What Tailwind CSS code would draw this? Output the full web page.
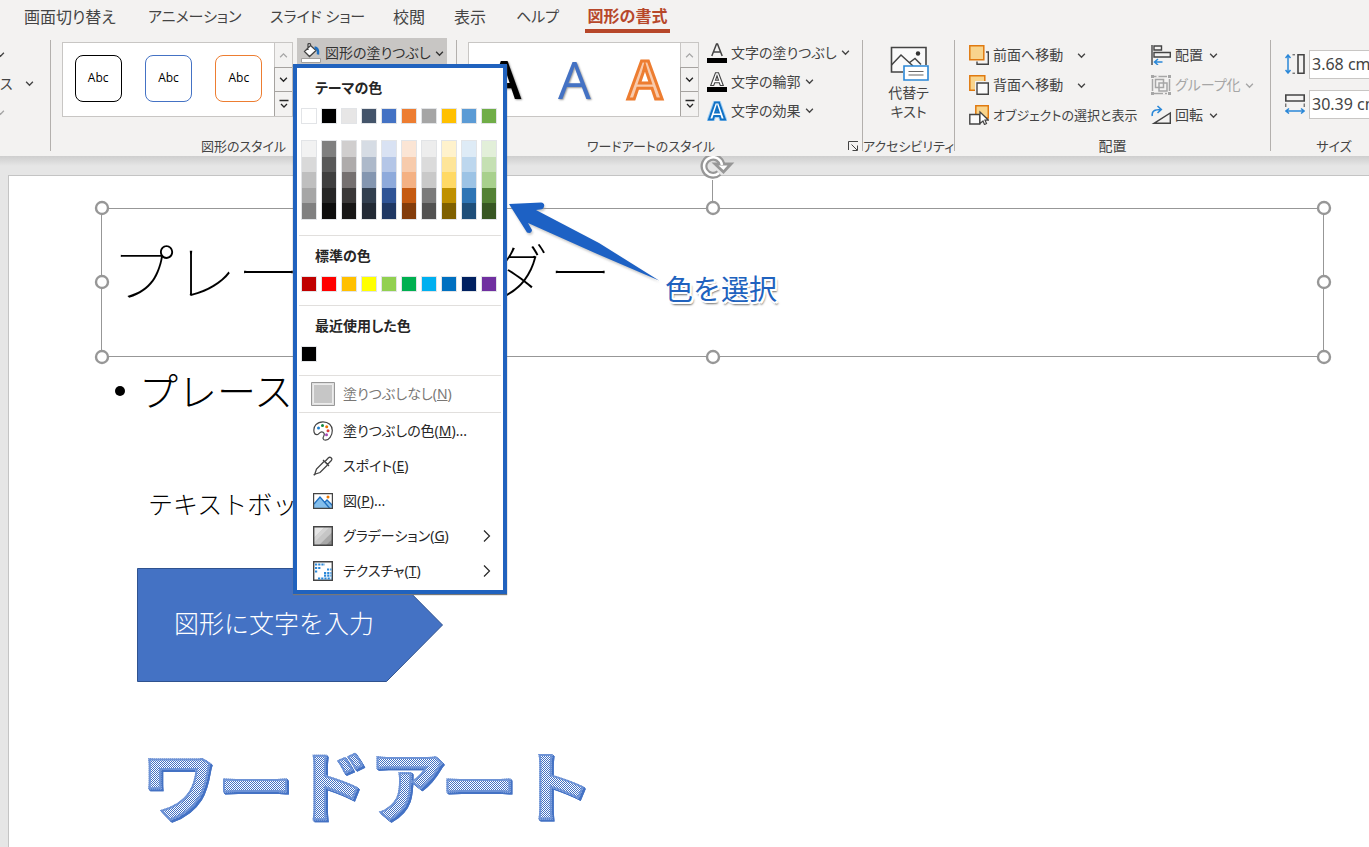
<!DOCTYPE html>
<html lang="ja">
<head>
<meta charset="utf-8">
<title>図形の書式</title>
<script src="https://cdn.jsdelivr.net/npm/@tailwindcss/browser@4"></script>
</head>
<body class="flex h-screen flex-col overflow-hidden bg-[#e6e6e6] font-['Noto_Sans','Noto_Sans_CJK_JP',sans-serif] text-sm text-[#444444]">

<svg class="hidden" aria-hidden="true">
  <symbol id="chev" viewBox="0 0 8 8"><path d="M1 2.500 4 5.500 7 2.500" fill="none" stroke="currentColor" stroke-width="1.200"/></symbol>
  <symbol id="up" viewBox="0 0 8 8"><path d="M1 5.500 4 2.500 7 5.500" fill="none" stroke="currentColor" stroke-width="1.100"/></symbol>
  <symbol id="more" viewBox="0 0 10 10"><path d="M0.500 1.500h9M2 5l3 3 3-3" fill="none" stroke="currentColor" stroke-width="1.300"/></symbol>
  <symbol id="right" viewBox="0 0 8 14"><path d="M1 1.500 6.500 7 1 12.500" fill="none" stroke="currentColor" stroke-width="1.200"/></symbol>
</svg>

<header class="relative z-10 shrink-0 bg-[#f3f2f1]">
  <nav class="flex h-[38px] pl-6 text-base whitespace-nowrap [font-feature-settings:'palt']">
    <button class="flex h-[33px] w-[124px] items-center">画面切り替え</button>
    <button class="flex h-[33px] w-[122px] items-center text-[15px]">アニメーション</button>
    <button class="flex h-[33px] w-[123px] items-center text-[15px]">スライド ショー</button>
    <button class="flex h-[33px] w-[61px] items-center">校閲</button>
    <button class="flex h-[33px] w-[62px] items-center">表示</button>
    <button class="flex h-[33px] w-[69px] items-center text-[15px]">ヘルプ</button>
    <button class="flex h-[33px] w-[85px] items-center justify-center border-b-4 border-[#b7472a] pt-[3px] font-bold text-[#b7472a]">図形の書式</button>
  </nav>

  <div class="flex h-[118px] whitespace-nowrap [font-feature-settings:'palt']">
    <section class="flex w-[50px] shrink-0 flex-col pt-[2px]">
      <button class="flex h-[29px] items-center" aria-label="図形の挿入"><svg class="-ml-1 size-[9px]"><use href="#chev"/></svg></button>
      <button class="flex h-[29px] items-center gap-3">ス<svg class="size-[9px]"><use href="#chev"/></svg></button>
      <button class="flex h-[29px] items-center text-[#a6a6a6]" aria-label="図形の結合"><svg class="-ml-1 size-[9px]"><use href="#chev"/></svg></button>
    </section>
    <div class="mt-[2px] mb-[5px] w-px shrink-0 bg-[#b3b0ad]"></div>

    <section class="flex w-[405px] shrink-0 flex-col">
      <div class="flex flex-1 items-start gap-1 pl-[11px]">
        <div class="mt-1 flex h-[75px] w-[231px] border border-[#c8c6c4] bg-white font-['Open_Sans','Noto_Sans',sans-serif] text-xs text-black">
          <div class="grid flex-1 grid-cols-3 place-items-center pb-0.5">
            <button class="size-[47px] rounded-lg border border-black pb-0.5">Abc</button>
            <button class="size-[47px] rounded-lg border border-[#4472c4] pb-0.5">Abc</button>
            <button class="size-[47px] rounded-lg border border-[#ed7d31] pb-0.5">Abc</button>
          </div>
          <div class="grid w-[18px] grid-rows-3 text-[#262626]">
            <button class="grid place-items-center border-l border-[#c8c6c4] bg-[#f3f2f1] text-[#a6a6a6]" aria-label="上へ"><svg class="size-[9px]"><use href="#up"/></svg></button>
            <button class="grid place-items-center border-y border-l border-[#a6a3a0] bg-[#f3f2f1]" aria-label="下へ"><svg class="size-[9px]"><use href="#chev"/></svg></button>
            <button class="grid place-items-center border-l border-[#a6a3a0] bg-[#f3f2f1]" aria-label="その他"><svg class="size-2.5"><use href="#more"/></svg></button>
          </div>
        </div>

        <div class="relative">
          <button class="flex h-[30px] w-[150px] items-center gap-1 bg-[#c8c6c4] pl-1 text-[#333333]">
            <svg class="h-5 w-5" viewBox="0 0 20 20" fill="none"><path d="M9.500 2.500 3.500 8.500 8.500 13.500 15 7.500 9.500 2.500V1.500C9.500.2 7 .2 7 1.500V7" fill="#fff" stroke="#444" stroke-width="1.300"/><path d="M13.500 4.500c3 .5 4 3 3.500 7" stroke="#1e6fc0" stroke-width="2.500"/><path d="M.5 15.500h19v4H.5z" fill="#fff" stroke="#a19f9d"/></svg>
            図形の塗りつぶし
            <svg class="size-[9px]"><use href="#chev"/></svg>
          </button>

          <div class="absolute top-[26px] -left-1 z-20 w-[214px] border-4 border-[#2062be] bg-white pb-[2px] text-[#262626] shadow-[0_1px_1px_#777777]">
            <h3 class="flex h-10 items-center pl-[18px] font-bold">テーマの色</h3>
            <div id="theme" class="flex gap-1 pl-1"></div>
            <div id="tints" class="mt-4 flex gap-1 pl-1"></div>
            <hr class="mx-0.5 mt-[15px] border-[#e1dfdd]">
            <h3 class="flex h-10 items-center pl-[18px] font-bold">標準の色</h3>
            <div id="standard" class="flex gap-1 pl-1"></div>
            <hr class="mx-0.5 mt-[13px] border-[#e1dfdd]">
            <h3 class="flex h-10 items-center pl-[18px] font-bold">最近使用した色</h3>
            <div id="recent" class="flex gap-1 pl-1"></div>
            <hr class="mx-0.5 mt-[13px] border-[#e1dfdd]">
            <button class="flex h-9 w-full items-center gap-2 pl-3.5 text-[#797775]">
              <svg class="size-6" viewBox="0 0 24 24"><path d="M.5.5h23v23H.5z" fill="#e0e0e0" stroke="#979797"/><path d="M2.500 2.500h19v19h-19z" fill="#c6c6c6" stroke="#ececec"/></svg>
              <span>塗りつぶしなし(<u>N</u>)</span>
            </button>
            <hr class="mx-0.5 border-[#e1dfdd]">
            <button class="flex h-[35px] w-full items-center gap-2.5 pl-4">
              <svg class="size-5" viewBox="0 0 20 20" fill="none"><path d="M1.200 11.500C-.5 5 4.500.8 10 .8c5.500 0 9.300 3.700 9.300 8.700 0 5.500-3.500 9.700-6.800 9.700-2.600 0-2.900-2.200-1.800-4 1.300-2.300.2-4.300-2-4.300-2.200 0-2.900 2.800-4.900 2.800-1.200 0-2.200-.7-2.600-2.200Z" stroke="#444" stroke-width="1.200"/><circle cx="5.500" cy="7" r="1.500" fill="#1e7fd0"/><circle cx="9.500" cy="4.600" r="1.500" fill="#10893e"/><circle cx="13.700" cy="5.700" r="1.500" fill="#ea7600"/><circle cx="15" cy="9.700" r="1.500" fill="#d83b3b"/><circle cx="13.500" cy="13.700" r="1.500" fill="#a44cb8"/></svg>
              <span>塗りつぶしの色(<u>M</u>)...</span>
            </button>
            <button class="flex h-[35px] w-full items-center gap-2.5 pl-4">
              <svg class="size-5" viewBox="0 0 20 20" fill="none" stroke="#444" stroke-width="1.300"><path d="M11 5.500 3.500 13 2 17.500.8 19.200 2.500 18 7 16.500 14.500 9"/><path d="m10 4 6 6M12 5.500l3.500-3.700c1.500-1.500 4.500.5 2.800 2.700L14.500 8.500z"/></svg>
              <span>スポイト(<u>E</u>)</span>
            </button>
            <button class="flex h-[35px] w-full items-center gap-2.5 pl-4">
              <svg class="size-5" viewBox="0 0 20 20"><path d="M.5 2.500h19v15H.5z" fill="#fff"/><path d="M1 13 7 6l5 5 2-2 5.500 5v3H1z" fill="#83beec"/><path d="m1 13 6-7 9.500 11M11.500 11.500 14 9l5.500 5.500" fill="none" stroke="#1e6fc0" stroke-width="1.300"/><circle cx="15" cy="6" r="1.500" fill="#ea7600"/><path d="M.6 2.600h18.800v14.800H.6z" fill="none" stroke="#444" stroke-width="1.200"/></svg>
              <span>図(<u>P</u>)...</span>
            </button>
            <button class="flex h-[35px] w-full items-center gap-2.5 pr-3 pl-4">
              <svg class="size-5" viewBox="0 0 20 20"><path d="M.7.7h18.600v18.600H.7z" fill="#c6c6c6"/><path d="M.7.7H12L.7 12z" fill="#e6e6e6"/><path d="M12 .7h5L.7 17v-5z" fill="#d4d4d4"/><path d="M19.300 6v13.300H6z" fill="#a8a8a8"/><path d="M19.300 13v6.300H13z" fill="#8a8a8a"/><path d="M.7.7h18.600v18.600H.7z" fill="none" stroke="#444" stroke-width="1.400"/></svg>
              <span class="flex-1 text-left">グラデーション(<u>G</u>)</span><svg class="h-3.5 w-2"><use href="#right"/></svg>
            </button>
            <button class="flex h-[35px] w-full items-center gap-2.5 pr-3 pl-4">
              <svg class="size-5" viewBox="0 0 20 20"><path d="M.7.7h18.600v18.600H.7z" fill="#fff" stroke="#444" stroke-width="1.400"/><path d="M2 3.500h10M2 7h6M2 10.500h3M14 8.500h4.500M11 12h7.500M11 14.700h7.500M5 17.500h13.500" stroke="#2b88d8" stroke-width="2.200" stroke-dasharray="2.200 1"/></svg>
              <span class="flex-1 text-left">テクスチャ(<u>T</u>)</span><svg class="h-3.5 w-2"><use href="#right"/></svg>
            </button>
          </div>
        </div>
      </div>
      <div class="flex h-5 items-center pr-5 text-[13px]"><span class="flex-1 text-center">図形のスタイル</span></div>
    </section>
    <div class="mt-[2px] mb-[5px] w-px shrink-0 bg-[#b3b0ad]"></div>

    <section class="flex w-[405px] shrink-0 flex-col">
      <div class="flex flex-1 items-start pl-[11px]">
        <div class="mt-1 flex h-[75px] w-[231px] border border-[#c8c6c4] bg-white font-['Open_Sans','Noto_Sans',sans-serif] text-[52px] leading-none">
          <div class="grid flex-1 grid-cols-3 place-items-center pb-0.5">
            <button class="font-semibold text-black [text-shadow:1px_1px_2px_#999999]">A</button>
            <button class="font-medium text-[#4472c4] [text-shadow:1px_1px_2px_#999999]">A</button>
            <button class="font-semibold text-[#f8cbad] [-webkit-text-stroke:3px_#ed7d31]">A</button>
          </div>
          <div class="grid w-[18px] grid-rows-3 text-[#262626]">
            <button class="grid place-items-center border-l border-[#c8c6c4] bg-[#f3f2f1] text-[#a6a6a6]" aria-label="上へ"><svg class="size-[9px]"><use href="#up"/></svg></button>
            <button class="grid place-items-center border-y border-l border-[#a6a3a0] bg-[#f3f2f1]" aria-label="下へ"><svg class="size-[9px]"><use href="#chev"/></svg></button>
            <button class="grid place-items-center border-l border-[#a6a3a0] bg-[#f3f2f1]" aria-label="その他"><svg class="size-2.5"><use href="#more"/></svg></button>
          </div>
        </div>
        <div class="flex flex-col pl-2">
          <button class="flex h-[29px] items-center gap-1"><svg class="size-5" viewBox="0 0 20 20"><path d="M4.800 13 9.500 1h1l4.700 12M6.500 9h7" fill="none" stroke="#444" stroke-width="1.500"/><path d="M0 15h20v5H0z"/></svg>文字の塗りつぶし<svg class="size-[9px]"><use href="#chev"/></svg></button>
          <button class="flex h-[29px] items-center gap-1"><svg class="size-5" viewBox="0 0 20 20"><path d="M3.700 13.500 8.500.8h3l4.800 12.700h-3l-1-2.700H7.700l-1 2.700zM8.500 8.200h3L10 3.800z" fill="#fff" stroke="#444" stroke-width="1.100"/><path d="M0 15h20v5H0z"/></svg>文字の輪郭<svg class="size-[9px]"><use href="#chev"/></svg></button>
          <button class="flex h-[29px] items-center gap-1"><svg class="size-5" viewBox="0 0 20 20"><path d="M2 18.500 8 1.500h4l6 17h-4l-1.200-3.500H7.200L6 18.500zM8.200 11.500h3.600L10 6z" fill="#fff" stroke="#9fcff5" stroke-width="4"/><path d="M2 18.500 8 1.500h4l6 17h-4l-1.200-3.500H7.200L6 18.500zM8.200 11.500h3.600L10 6z" fill="#fff" stroke="#1171c4" stroke-width="2"/></svg>文字の効果<svg class="size-[9px]"><use href="#chev"/></svg></button>
        </div>
      </div>
      <div class="flex h-5 items-center pr-px text-[13px]"><span class="flex-1 text-center">ワードアートのスタイル</span>
        <button class="grid w-4 place-items-center" aria-label="図形の書式設定"><svg class="size-3" viewBox="0 0 12 12" fill="none" stroke="#444"><path d="M1.500 10V1.500H11M4.500 4.500l5.500 5.500M10.500 5.500v5h-5"/></svg></button></div>
    </section>
    <div class="mt-[2px] mb-[5px] w-px shrink-0 bg-[#b3b0ad]"></div>

    <section class="flex w-[91px] shrink-0 flex-col items-center">
      <button class="flex flex-1 flex-col items-center pt-2 leading-[19px]">
        <svg class="mb-0.5 ml-0.5 h-[35px] w-[39px]" viewBox="0 0 39 35" fill="none"><path d="M13 26H1.500V1.500H36V19" fill="#fafafa" stroke="#444" stroke-width="1.600"/><path d="m1.500 19 9.500-10 12 11M19 17l6-4.500 6 6" stroke="#444" stroke-width="1.500"/><circle cx="28" cy="7.500" r="2.200" fill="#333"/><path d="M14 20h24v14H14z" fill="#fff" stroke="#2b88d8" stroke-width="1.600"/><path d="M18.500 25.500h15M18.500 29h15" stroke="#666" stroke-width="1.200"/></svg>
        <span>代替テ<br>キスト</span>
      </button>
      <div class="flex h-5 items-center text-[13px]">アクセシビリティ</div>
    </section>
    <div class="mt-[2px] mb-[5px] w-px shrink-0 bg-[#b3b0ad]"></div>

    <section class="flex w-[315px] shrink-0 flex-col">
      <div class="flex flex-1 pt-[2px] pl-3.5">
        <div class="flex w-[182px] flex-col">
          <button class="flex h-[30px] items-center gap-1"><svg class="size-5" viewBox="0 0 20 20" fill="none"><path d="M17 7h2.300v12.300H8V16.500" stroke="#444" stroke-width="1.400"/><path d="M.8.8h14v14H.8z" fill="#f8d48c" stroke="#e07a10" stroke-width="1.500"/></svg><span class="w-20 text-left">前面へ移動</span><svg class="size-[9px]"><use href="#chev"/></svg></button>
          <button class="flex h-[30px] items-center gap-1"><svg class="size-5" viewBox="0 0 20 20" fill="none"><path d="M.8.8h15v14.500H.8z" fill="#f8d48c" stroke="#e07a10" stroke-width="1.500"/><path d="M6 6h14v14H6z" fill="#f3f2f1"/><path d="M8 8h11.300v11.300H8z" fill="#fafafa" stroke="#444" stroke-width="1.400"/></svg><span class="w-20 text-left">背面へ移動</span><svg class="size-[9px]"><use href="#chev"/></svg></button>
          <button class="flex h-[30px] items-center gap-1 text-[13px]"><svg class="size-5" viewBox="0 0 20 20" fill="none"><path d="M6.800.8h12.500V13H6.800z" fill="#f8d48c" stroke="#e07a10" stroke-width="1.500"/><path d="M.8 9.500h10v9.500H.8z" fill="#fafafa" stroke="#444" stroke-width="1.400"/><path d="M11 7v11.500l3-2.500 1.500 3.500 2-1-1.500-3.300h3.500z" fill="#fff" stroke="#444" stroke-width="1.200"/></svg>オブジェクトの選択と表示</button>
        </div>
        <div class="flex flex-col">
          <button class="flex h-[30px] items-center gap-1"><svg class="size-5" viewBox="0 0 20 20" fill="none"><path d="M1 0v20M3 1h7.500v4H3zM3 7.500h16.300v4.500H3z" stroke="#444" stroke-width="1.400"/><path d="M11.500 17H3.500m3.500-3-3.500 3L7 20" stroke="#2b88d8" stroke-width="1.500"/></svg>配置<svg class="ml-0.5 size-[9px]"><use href="#chev"/></svg></button>
          <button class="flex h-[30px] items-center gap-1 text-[#a6a6a6]"><svg class="size-5" viewBox="0 0 20 20" fill="none" stroke="#a6a6a6" stroke-width="1.500"><path d="M4.500 4.500h8v8h-8zM8 8h8v8H8zM3 1.500h13M3 18.500h13M1.500 4v12M18.500 4v12" /><path d="M0 1.500h3M17 1.500h3M0 18.500h3M17 18.500h3" stroke-width="3"/><path d="M5.500 1.500h2M12 18.500h2" stroke="#f3f2f1" stroke-width="2"/></svg>グループ化<svg class="size-[9px]"><use href="#chev"/></svg></button>
          <button class="flex h-[30px] items-center gap-1"><svg class="size-5" viewBox="0 0 20 20" fill="none"><path d="M3 18.300h16.300V8z" stroke="#444" stroke-width="1.400"/><path d="M1.300 11C.5 6 3.500 4.500 10 4.500M6.500 1 10.300 4.500 6.500 8" stroke="#2b88d8" stroke-width="1.600"/></svg>回転<svg class="ml-0.5 size-[9px]"><use href="#chev"/></svg></button>
        </div>
      </div>
      <div class="flex h-5 items-center justify-center">配置</div>
    </section>
    <div class="mt-[2px] mb-[5px] w-px shrink-0 bg-[#b3b0ad]"></div>

    <section class="flex w-[126px] shrink-0 flex-col">
      <div class="flex flex-1 flex-col pt-1.5 pl-3.5 text-base">
        <label class="flex h-10 items-center gap-1" aria-label="高さ"><svg class="h-5 w-5" viewBox="0 0 20 20" fill="none"><path d="M3 1v18M.5 4 3 1l2.500 3M.5 16 3 19l2.500-3" stroke="#2b88d8" stroke-width="1.500"/><path d="M7.500.8H10M7.500 19.200H10" stroke="#444"/><path d="M13 .8h6v18.400h-6z" stroke="#444" stroke-width="1.600"/></svg><input class="h-[29px] w-20 border border-[#c8c6c4] bg-white px-[2px]" value="3.68 cm" aria-label="高さ"></label>
        <label class="flex h-10 items-center gap-1" aria-label="幅"><svg class="h-5 w-5" viewBox="0 0 20 20" fill="none"><path d="M1 17h18M4 14.500 1 17l3 2.500M16 14.500 19 17l-3 2.500" stroke="#2b88d8" stroke-width="1.500"/><path d="M.8 9.500V13M19.200 9.500V13" stroke="#444"/><path d="M.8 1h18.400v6H.8z" stroke="#444" stroke-width="1.600"/></svg><input class="h-[29px] w-20 border border-[#c8c6c4] bg-white px-[2px]" value="30.39 cm" aria-label="幅"></label>
      </div>
      <div class="flex h-5 items-center justify-center text-[13px]">サイズ</div>
    </section>
  </div>
</header>

<main class="flex flex-1 flex-col overflow-hidden bg-[linear-gradient(#cecece,#e6e6e6_10px)] pt-[19px] pl-2">
  <!-- Slide: its objects sit on a free canvas -->
  <div class="relative flex-1 border-t border-l border-[#c4c4c4] bg-white text-black font-['Noto_Sans_CJK_JP',sans-serif]">
    <svg class="absolute top-0 left-0 h-48 w-[1340px] overflow-visible" fill="none" stroke="#979797">
      <path d="M92.500 32.500h1222v148h-1222zM703.500 4v24"/>
      <g fill="#fff" stroke-width="2.400"><circle cx="93" cy="32" r="6"/><circle cx="704" cy="32" r="6"/><circle cx="1315" cy="32" r="6"/><circle cx="93" cy="106" r="6"/><circle cx="1315" cy="106" r="6"/><circle cx="93" cy="181" r="6"/><circle cx="704" cy="181" r="6"/><circle cx="1315" cy="181" r="6"/></g>
      <path d="M710-3A9 9 0 1 1 713-10" stroke-width="7"/><path d="M705-12.500h18l-8.500 9z" fill="#979797" stroke-width="2"/>
      <path d="M710-3A9 9 0 1 1 713-11" stroke="#fff" stroke-width="2.500"/><path d="M709.500-10.500h9L714.500-6z" fill="#fff" stroke="none"/>
    </svg>
    <h1 class="absolute top-[53px] left-[102px] text-[63px] leading-[80px] font-thin whitespace-nowrap">プレースホルダー</h1>
    <div class="absolute top-[188px] left-[106px] flex items-center gap-[14px] text-[39px] leading-[50px] font-light whitespace-nowrap"><span class="mt-1 size-2.5 rounded-full bg-black"></span>プレースホルダー</div>
    <p class="absolute top-[309px] left-[139px] text-[25px] leading-9 font-light whitespace-nowrap">テキストボックス</p>
    <div class="absolute top-[392px] left-32 h-[114px] w-[306px]">
      <svg class="absolute inset-0 h-full w-full" viewBox="0 0 306 114"><path d="M.5.500h249l56 56.500-56 56.500H.5z" fill="#4472c4" stroke="#2f528f"/></svg>
      <span class="relative block pt-9 pl-[37px] text-[25px] leading-9 font-light whitespace-nowrap text-white">図形に文字を入力</span>
    </div>
    <div class="absolute top-[556px] left-[132px] bg-[conic-gradient(#4472c4_25%,#ffffff_0_50%,#4472c4_0_75%,#ffffff_0)] bg-[length:2px_2px] bg-clip-text text-[76px] leading-[100px] font-bold whitespace-nowrap text-transparent [-webkit-text-stroke:2px_#6e93d6] [filter:drop-shadow(1px_1px_0_#4472c4)_drop-shadow(1px_1px_0_#4472c4)]">ワードアート</div>

    <svg class="absolute top-6 left-[498px] h-[86px] w-[156px] drop-shadow-[1px_2px_1px_#99999988]" viewBox="0 0 156 86"><path d="M2 4 34 2.500Q38 3 37 6.500 36.500 9.500 33 9.500L29 10 92 43 152 80.500 88 53 21 23 25 30Q24.500 34 20 32.500z" fill="#1d61c4"/></svg>
    <p class="absolute top-[92px] left-[656px] text-[28px] leading-10 whitespace-nowrap text-[#2062be] [text-shadow:-2px_0_0_#fff,2px_0_0_#fff,0_-2px_0_#fff,0_2px_0_#fff,2px_2px_0_#fff,-2px_-2px_0_#fff,2px_3px_2px_#666666]">色を選択</p>
  </div>
</main>

<script>
  const theme = ['#ffffff','#000000','#e7e6e6','#44546a','#4472c4','#ed7d31','#a5a5a5','#ffc000','#5b9bd5','#70ad47'];
  const standard = ['#c00000','#ff0000','#ffc000','#ffff00','#92d050','#00b050','#00b0f0','#0070c0','#002060','#7030a0'];
  const tints = [
    ['#f2f2f2','#d9d9d9','#bfbfbf','#a6a6a6','#808080'],
    ['#7f7f7f','#595959','#3f3f3f','#262626','#0d0d0d'],
    ['#d0cece','#aeabab','#757070','#3a3838','#171616'],
    ['#d6dce4','#adb9ca','#8496b0','#323f4f','#222a35'],
    ['#d9e2f3','#b4c6e7','#8eaadb','#2f5496','#1f3864'],
    ['#fbe5d5','#f7cbac','#f4b183','#c55a11','#833c0b'],
    ['#ededed','#dbdbdb','#c9c9c9','#7b7b7b','#525252'],
    ['#fff2cc','#fee599','#ffd965','#bf9000','#7f6000'],
    ['#deebf6','#bdd7ee','#9cc3e5','#2e75b5','#1e4e79'],
    ['#e2efd9','#c5e0b3','#a8d08d','#538135','#375623']];
  const swatch = c => `<button class="size-4 border border-[#e2e4e7]" style="background:${c}" aria-label="${c}"></button>`;
  const cell = c => `<button class="w-full flex-1" style="background:${c}" aria-label="${c}"></button>`;
  document.getElementById('theme').innerHTML = theme.map(swatch).join('');
  document.getElementById('standard').innerHTML = standard.map(swatch).join('');
  document.getElementById('recent').innerHTML = swatch('#000000');
  document.getElementById('tints').innerHTML = tints.map(t => `<div class="flex h-20 w-4 flex-col border border-[#e2e4e7]">${t.map(cell).join('')}</div>`).join('');
</script>
</body>
</html>
